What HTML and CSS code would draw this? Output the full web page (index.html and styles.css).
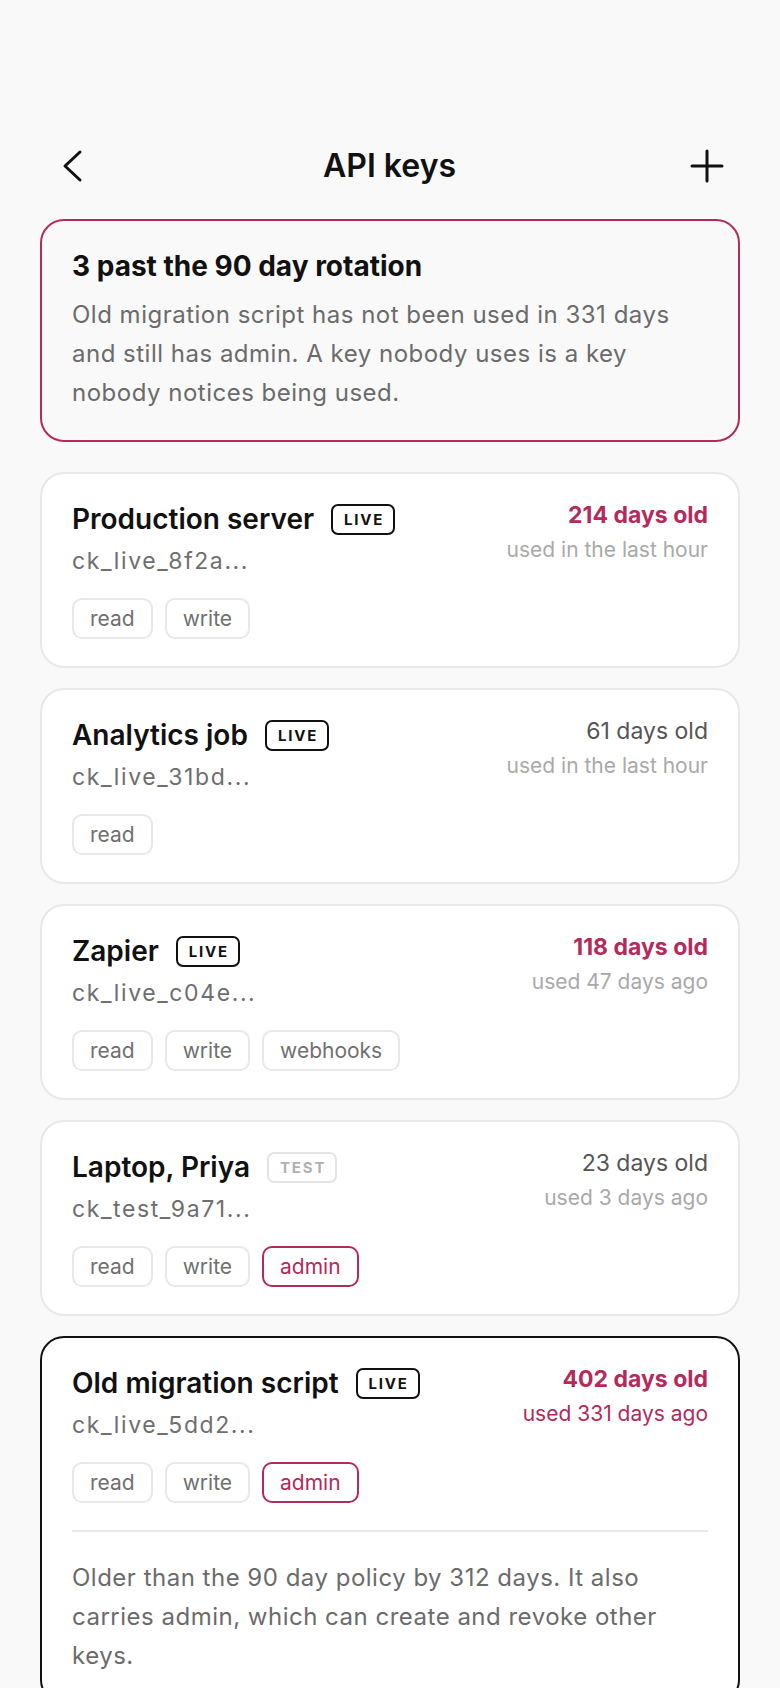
FILE: index.html
```html
<!DOCTYPE html>
<html lang="en">
<head>
    <meta charset="UTF-8">
    <meta name="viewport" content="width=device-width, initial-scale=1.0">
    <title>API keys</title>
    <link rel="stylesheet" href="styles.css">
</head>
<body>
    <div class="screen">
        <header class="topbar">
            <button class="icon-btn" aria-label="Back">
                <svg width="48" height="48" viewBox="0 0 48 48" fill="none" stroke="currentColor" stroke-width="3" stroke-linecap="round" stroke-linejoin="round">
                    <polyline points="32,10 17,24 32,38"/>
                </svg>
            </button>
            <h1>API keys</h1>
            <button class="icon-btn" aria-label="New key">
                <svg width="48" height="48" viewBox="0 0 48 48" fill="none" stroke="currentColor" stroke-width="3" stroke-linecap="round">
                    <line x1="9" y1="24" x2="39" y2="24"/>
                    <line x1="24" y1="9" x2="24" y2="39"/>
                </svg>
            </button>
        </header>

        <section class="alert">
            <h2>3 past the 90 day rotation</h2>
            <p>Old migration script has not been used in 331 days and still has admin. A key nobody uses is a key nobody notices being used.</p>
        </section>

        <ul class="key-list">
            <li class="key-card">
                <div class="key-top">
                    <div class="key-main">
                        <div class="key-name-row">
                            <span class="key-name">Production server</span>
                            <span class="env">LIVE</span>
                        </div>
                        <div class="key-token">ck_live_8f2a...</div>
                    </div>
                    <div class="key-age">
                        <div class="age stale">214 days old</div>
                        <div class="last-used">used in the last hour</div>
                    </div>
                </div>
                <div class="scopes">
                    <span class="scope">read</span>
                    <span class="scope">write</span>
                </div>
            </li>

            <li class="key-card">
                <div class="key-top">
                    <div class="key-main">
                        <div class="key-name-row">
                            <span class="key-name">Analytics job</span>
                            <span class="env">LIVE</span>
                        </div>
                        <div class="key-token">ck_live_31bd...</div>
                    </div>
                    <div class="key-age">
                        <div class="age">61 days old</div>
                        <div class="last-used">used in the last hour</div>
                    </div>
                </div>
                <div class="scopes">
                    <span class="scope">read</span>
                </div>
            </li>

            <li class="key-card">
                <div class="key-top">
                    <div class="key-main">
                        <div class="key-name-row">
                            <span class="key-name">Zapier</span>
                            <span class="env">LIVE</span>
                        </div>
                        <div class="key-token">ck_live_c04e...</div>
                    </div>
                    <div class="key-age">
                        <div class="age stale">118 days old</div>
                        <div class="last-used">used 47 days ago</div>
                    </div>
                </div>
                <div class="scopes">
                    <span class="scope">read</span>
                    <span class="scope">write</span>
                    <span class="scope">webhooks</span>
                </div>
            </li>

            <li class="key-card">
                <div class="key-top">
                    <div class="key-main">
                        <div class="key-name-row">
                            <span class="key-name">Laptop, Priya</span>
                            <span class="env env-test">TEST</span>
                        </div>
                        <div class="key-token">ck_test_9a71...</div>
                    </div>
                    <div class="key-age">
                        <div class="age">23 days old</div>
                        <div class="last-used">used 3 days ago</div>
                    </div>
                </div>
                <div class="scopes">
                    <span class="scope">read</span>
                    <span class="scope">write</span>
                    <span class="scope scope-admin">admin</span>
                </div>
            </li>

            <li class="key-card selected">
                <div class="key-top">
                    <div class="key-main">
                        <div class="key-name-row">
                            <span class="key-name">Old migration script</span>
                            <span class="env">LIVE</span>
                        </div>
                        <div class="key-token">ck_live_5dd2...</div>
                    </div>
                    <div class="key-age">
                        <div class="age stale">402 days old</div>
                        <div class="last-used stale-use">used 331 days ago</div>
                    </div>
                </div>
                <div class="scopes">
                    <span class="scope">read</span>
                    <span class="scope">write</span>
                    <span class="scope scope-admin">admin</span>
                </div>
                <div class="divider"></div>
                <p class="key-note">Older than the 90 day policy by 312 days. It also carries admin, which can create and revoke other keys.</p>
            </li>
        </ul>
    </div>
</body>
</html>
```

FILE: styles.css
```css
body {
    margin: 0;
    background: #f9f9f9;
    color: #111;
    font-family: Inter, "Noto Sans", sans-serif;
}
.screen {
    padding: 136px 40px 40px;
}

/* top bar */
.topbar {
    display: flex;
    align-items: center;
    height: 60px;
    padding: 0 9px 0 8px;
    margin-bottom: 23px;
}
.topbar h1 {
    flex: 1;
    margin: 0;
    text-align: center;
    font-size: 32px;
    font-weight: 600;
    line-height: 60px;
}
.icon-btn {
    width: 48px;
    height: 48px;
    padding: 0;
    border: none;
    background: none;
    color: #111;
    display: flex;
}

/* rotation warning */
.alert {
    border: 2px solid #b32a5b;
    border-radius: 24px;
    padding: 28px 30px;
    margin-bottom: 30px;
}
.alert h2 {
    margin: 0 0 12px;
    font-size: 28px;
    font-weight: 700;
    line-height: 34px;
}
.alert p {
    margin: 0;
    font-size: 24px;
    line-height: 39px;
    letter-spacing: 0.5px;
    color: #6b6b6b;
}

/* key cards */
.key-list {
    list-style: none;
    margin: 0;
    padding: 0;
}
.key-card {
    background: #fff;
    border: 2px solid #e8e8e8;
    border-radius: 24px;
    padding: 28px 30px 27px;
    margin-bottom: 20px;
}
.key-card.selected {
    border-color: #111;
}
.key-top {
    display: flex;
    justify-content: space-between;
    align-items: flex-start;
}
.key-name-row {
    display: flex;
    align-items: center;
    gap: 17px;
    height: 34px;
}
.key-name {
    font-size: 28px;
    font-weight: 600;
    line-height: 34px;
}
.env {
    border: 2px solid #111;
    border-radius: 7px;
    padding: 0 9px 0 11px;
    font-size: 15px;
    font-weight: 700;
    letter-spacing: 0.12em;
    line-height: 27px;
}
.env-test {
    border-color: #e4e4e4;
    color: #b0b0b0;
}
.key-token {
    margin-top: 10px;
    font-size: 23px;
    line-height: 30px;
    letter-spacing: 1.6px;
    color: #6e6e6e;
}
.key-age {
    text-align: right;
}
.age {
    font-size: 23px;
    line-height: 26px;
    color: #555;
}
.age.stale {
    font-weight: 700;
    color: #b32a5b;
}
.last-used {
    margin-top: 8px;
    font-size: 21px;
    line-height: 28px;
    color: #a9a9a9;
}
.last-used.stale-use {
    color: #b32a5b;
}

/* scope pills */
.scopes {
    display: flex;
    gap: 12px;
    margin-top: 22px;
}
.scope {
    border: 2px solid #e8e8e8;
    border-radius: 10px;
    padding: 0 16px;
    font-size: 21px;
    line-height: 37px;
    color: #707070;
}
.scope-admin {
    border-color: #b32a5b;
    color: #b32a5b;
}

.divider {
    height: 2px;
    background: #e8e8e8;
    margin: 27px 0 26px;
}
.key-note {
    margin: 0;
    font-size: 24px;
    line-height: 39px;
    letter-spacing: 0.5px;
    color: #6b6b6b;
}
```
